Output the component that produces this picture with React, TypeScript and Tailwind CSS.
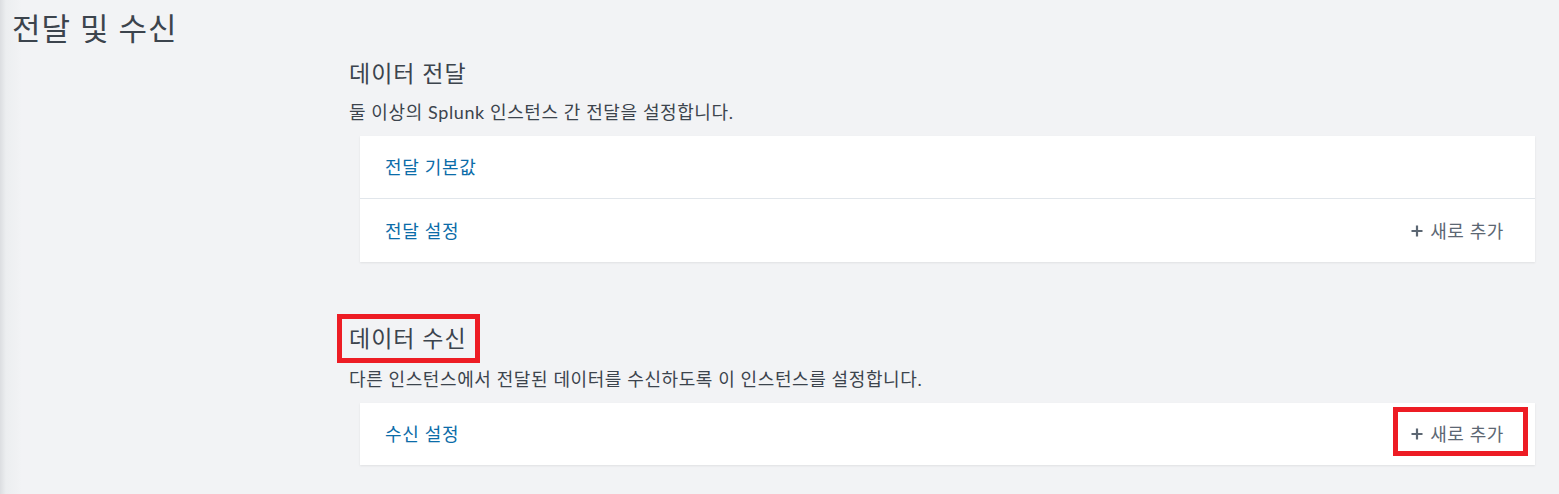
import React from 'react'

const FONT = '[font-family:Lato,"Noto_Sans_CJK_KR","Noto_Sans",sans-serif]'

type Row = { label: string; addNew?: boolean; marked?: boolean }

/** 새로 추가 앞의 플러스 아이콘 */
const PlusIcon = () => (
  <svg width="12" height="12" viewBox="0 0 12 12" className="shrink-0">
    <path d="M6 0.5v11M0.5 6h11" stroke="currentColor" strokeWidth="2.2" />
  </svg>
)

/** 섹션 카드 안의 한 줄 */
const CardRow: React.FC<{ row: Row; first: boolean }> = ({ row, first }) => (
  <div
    className={`flex items-center justify-between pl-[25px] pr-[31px] ${
      first ? 'h-[62px]' : 'h-[64px] border-t border-[#e1e6eb]'
    }`}
  >
    <a className="text-[18px] leading-6 tracking-[0.7px] text-[#0b6ca8] cursor-pointer">{row.label}</a>
    {row.addNew && (
      <span className="relative flex items-center gap-[7px] text-[18px] leading-6 tracking-[0.6px] text-[#5c6773]">
        <PlusIcon />
        <span>새로 추가</span>
        {row.marked && (
          <span className="absolute -left-[18px] -right-[24px] -top-[15px] -bottom-[10px] border-[5px] border-[#ed1c24]" />
        )}
      </span>
    )}
  </div>
)

const Section: React.FC<{
  title: string
  desc: string
  rows: Row[]
  marked?: boolean
}> = ({ title, desc, rows, marked }) => (
  <section>
    {marked ? (
      <h2 className="inline-block -ml-[12px] border-[5px] border-[#ed1c24] pl-[7px] pr-[8px] text-[23px] leading-[39px] tracking-[1px] text-[#3c444d]">
        {title}
      </h2>
    ) : (
      <h2 className="text-[23px] leading-7 tracking-[1px] text-[#3c444d]">{title}</h2>
    )}
    <p className={`text-[18px] leading-6 tracking-[0.6px] text-[#3c444d] ${marked ? 'mt-[4px]' : 'mt-[13px]'}`}>
      {desc}
    </p>
    <div className="mt-[12px] ml-[11px] bg-white shadow-[0_1px_2px_rgba(0,0,0,0.08)]">
      {rows.map((row, i) => (
        <CardRow key={row.label} row={row} first={i === 0} />
      ))}
    </div>
  </section>
)

export default function App() {
  return (
    <div
      className={`min-h-screen w-full bg-[#f2f3f5] bg-[linear-gradient(to_right,#dcdee1,#eceef0_6px,#f2f3f5_22px)] ${FONT}`}
    >
      {/* 페이지 제목 */}
      <h1 className="pl-[12px] pt-[10px] text-[31px] leading-9 tracking-[1px] text-[#3c444d]">전달 및 수신</h1>

      <div className="pl-[349px] pr-[24px] mt-[13px] pb-[29px]">
        <Section
          title="데이터 전달"
          desc="둘 이상의 Splunk 인스턴스 간 전달을 설정합니다."
          rows={[{ label: '전달 기본값' }, { label: '전달 설정', addNew: true }]}
        />
        <div className="mt-[52px]">
          <Section
            title="데이터 수신"
            desc="다른 인스턴스에서 전달된 데이터를 수신하도록 이 인스턴스를 설정합니다."
            rows={[{ label: '수신 설정', addNew: true, marked: true }]}
            marked
          />
        </div>
      </div>
    </div>
  )
}
